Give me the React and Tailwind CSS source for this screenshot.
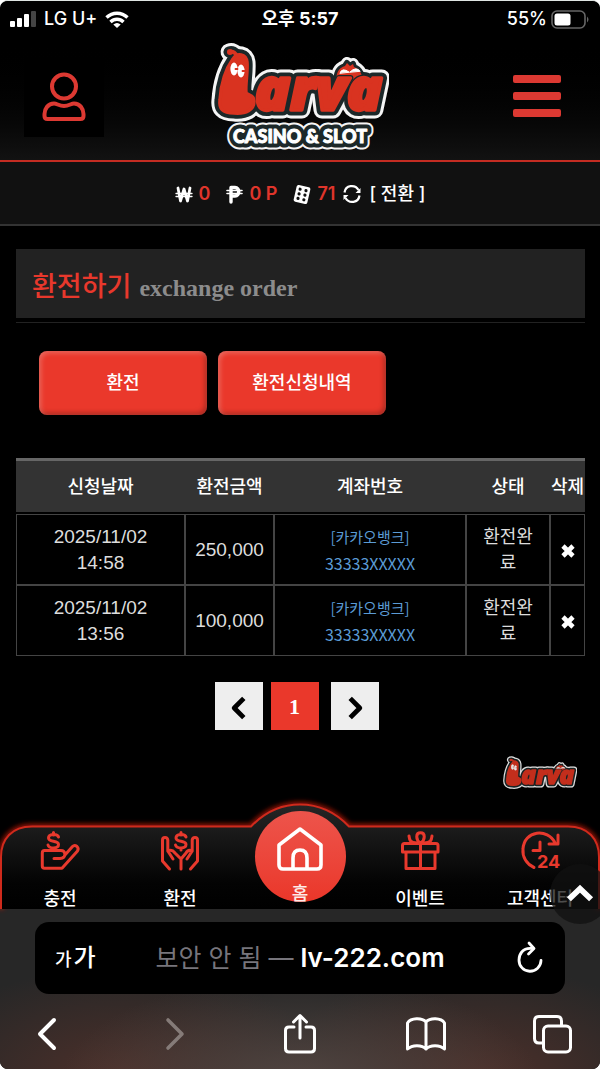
import React from "react";

const KR = "font-['Inter','Noto_Sans_CJK_KR',sans-serif]";

function LarvaLogo({ id, subtitle, className }) {
  const word = `${id}-word`;
  const sub = `${id}-sub`;
  const buddy = `${id}-buddy`;
  return (
    <svg
      className={className}
      viewBox={subtitle ? "0 0 178 112" : "0 0 178 82"}
      role="img"
      aria-label={subtitle ? "Larva Casino & Slot" : "Larva"}
      strokeLinejoin="round"
      strokeLinecap="round"
    >
      <defs>
        <g id={word}>
          <text x="44" y="70" className="font-['Open_Sans',sans-serif] text-[58px] font-extrabold italic">
            arva
          </text>
          <path d="M22 19C26 12 35 14 36 22C37 32 34 44 35 53C38 56 43 55 43 61C43 70 35 74 23 73C11 73 8 68 9 60C10 45 14 30 22 19Z" />
          <path d="M18 12C21 11 24 12 26 16" />
        </g>
        <path
          id={buddy}
          d="M126 46C124 32 128 28 134 26L136 23L139 26L142 24L143 27C149 29 152 34 152 46Z"
        />
        {subtitle && (
          <text
            id={sub}
            x="89"
            y="103"
            textAnchor="middle"
            className="font-['Lato',sans-serif] text-[18px] font-black"
          >
            CASINO &amp; SLOT
          </text>
        )}
      </defs>
      <g fill="#f5f5f5" stroke="#f5f5f5">
        <use href={`#${word}`} strokeWidth="17" />
        <use href={`#${buddy}`} strokeWidth="12" />
      </g>
      <g fill="#1c2829" stroke="#1c2829">
        <use href={`#${word}`} strokeWidth="11" />
        <use href={`#${buddy}`} strokeWidth="6" />
      </g>
      <use href={`#${buddy}`} fill="#d93320" />
      <path d="M129 33Q131 27 138 32ZM139 32Q145 26 149 31Z" fill="#fff" stroke="#fff" />
      <use href={`#${word}`} fill="#1c2829" stroke="#1c2829" strokeWidth="6" />
      <use href={`#${word}`} fill="#d93320" stroke="#d93320" strokeWidth="3.5" />
      <circle cx="19" cy="12" r="3" fill="#d93320" />
      <g fill="#fff">
        <ellipse cx="23" cy="29" rx="3.6" ry="6.5" />
        <ellipse cx="30" cy="31" rx="3.6" ry="6.5" />
      </g>
      <path d="M24.500 29h2M31.500 31h2" stroke="#d93320" strokeWidth="1.8" />
      {subtitle && (
        <>
          <use href={`#${sub}`} fill="#f5f5f5" stroke="#f5f5f5" strokeWidth="13" />
          <use href={`#${sub}`} fill="#1c2829" stroke="#1c2829" strokeWidth="9" />
          <use href={`#${sub}`} fill="#fff" stroke="#fff" strokeWidth="1" />
        </>
      )}
    </svg>
  );
}

function Icon({ className, box = "0 0 40 40", width = 2.6, children }) {
  return (
    <svg
      className={`overflow-visible ${className}`}
      viewBox={box}
      fill="none"
      stroke="currentColor"
      strokeWidth={width}
      strokeLinecap="round"
      strokeLinejoin="round"
      aria-hidden="true"
    >
      {children}
    </svg>
  );
}

function StatusBar() {
  return (
    <div className="grid h-9 grid-cols-3 items-center px-2.5 text-lg font-medium text-white">
      <div className="flex items-center gap-2">
        <svg className="h-4 w-[26px]" viewBox="0 0 26 16" fill="#fff" aria-hidden="true">
          <rect x="0" y="10" width="5" height="6" rx="1" />
          <rect x="7" y="7" width="5" height="9" rx="1" />
          <rect x="14" y="3" width="5" height="13" rx="1" />
          <rect x="21" y="0" width="5" height="16" rx="1" fill="#444" />
        </svg>
        <span>LG U+</span>
        <svg className="h-[17px] w-6" viewBox="0 0 24 17" fill="none" stroke="#fff" strokeWidth="3.4" aria-hidden="true">
          <path d="M1.500 6.500C7.500 .8 16.500 .8 22.500 6.500M5.500 11C9.300 7.300 14.700 7.300 18.500 11" />
          <path d="M8.300 13.500Q12 10.300 15.700 13.500L12 17Z" fill="#fff" stroke="none" />
        </svg>
      </div>
      <div className="text-center font-bold">오후 5:57</div>
      <div className="flex items-center justify-end gap-1">
        <span>55%</span>
        <svg className="h-[19px] w-[39px]" viewBox="0 0 39 19" aria-hidden="true">
          <rect x="1" y="1" width="33" height="17" rx="5" fill="none" stroke="#666" strokeWidth="1.6" />
          <rect x="3.500" y="3.500" width="16" height="12" rx="2.500" fill="#fff" />
          <path d="M36 6.500q3 3 0 6Z" fill="#666" />
        </svg>
      </div>
    </div>
  );
}

function Balances() {
  return (
    <section className="flex h-16 items-center justify-center border-b-2 border-[#333] bg-[#111] pt-0.5 text-lg font-semibold text-[#e0352b]">
      <span className="flex items-center gap-1.5">
        <Icon className="h-[17px] w-[18px] text-white" box="0 0 18 17" width={2.8}>
          <path d="M3 2L5.500 15L9 3L12.500 15L15 2" />
          <path d="M1 7.500H17M1 10.500H17" strokeWidth="1.300" />
        </Icon>
        0
      </span>
      <span className="ml-4 flex items-center gap-1.5">
        <Icon className="h-[19px] w-[17px] text-white" box="0 0 17 19" width={3.4}>
          <path d="M5 17V2.500H9C14 2.500 14 11 9 11H5" />
          <path d="M1 5.500H16M1 8.500H16" strokeWidth="1.600" />
        </Icon>
        0 P
      </span>
      <span className="ml-4 flex items-center gap-1.5">
        <svg className="h-[19px] w-[18px]" viewBox="0 0 18 19" aria-hidden="true">
          <g transform="rotate(13 9 9.500)">
            <rect x="2" y="1" width="14" height="17" rx="2" fill="#fff" />
            <g fill="#111">
              <circle cx="6" cy="4.800" r="1.600" />
              <circle cx="6" cy="9.500" r="1.600" />
              <circle cx="6" cy="14.200" r="1.600" />
              <circle cx="12" cy="4.800" r="1.600" />
              <circle cx="12" cy="9.500" r="1.600" />
              <circle cx="12" cy="14.200" r="1.600" />
            </g>
          </g>
        </svg>
        71
      </span>
      <button type="button" className="ml-2 flex items-center gap-2 font-medium text-white">
        <Icon className="h-5 w-[18px]" box="0 0 18 20" width={2.2}>
          <path d="M1.500 8.500C2.500 1 12 0 15.500 6M16.500 11.500C15.500 19 6 20 2.500 14" strokeLinecap="butt" />
          <path d="M17.500 4V9H12.500ZM.5 16V11H5.500Z" fill="currentColor" stroke="none" />
        </Icon>
        [ 전환 ]
      </button>
    </section>
  );
}

const orders = [
  { day: "2025/11/02", time: "14:58", amount: "250,000" },
  { day: "2025/11/02", time: "13:56", amount: "100,000" },
];

const redButton =
  "h-16 w-[168px] rounded-lg bg-[#ea382b] text-lg font-medium text-white shadow-[inset_2px_2px_5px_rgba(255,255,255,0.25),inset_-2px_-2px_5px_rgba(0,0,0,0.3)]";
const cell = "border border-[#444] p-0 text-center";

function Orders() {
  return (
    <table className="mt-[43px] w-full table-fixed border-separate border-spacing-0 text-lg text-[#ddd]">
      <colgroup>
        <col className="w-[169px]" />
        <col className="w-[89px]" />
        <col />
        <col className="w-[84px]" />
        <col className="w-[35px]" />
      </colgroup>
      <thead>
        <tr className="h-14 whitespace-nowrap text-white">
          {["신청날짜", "환전금액", "계좌번호", "상태", "삭제"].map((h) => (
            <th key={h} scope="col" className="border-t-3 border-b-2 border-t-[#666] border-b-black bg-[#333] p-0 font-medium">
              {h}
            </th>
          ))}
        </tr>
      </thead>
      <tbody>
        {orders.map((o) => (
          <tr key={o.time} className="h-[71px] leading-[26px]">
            <td className={`${cell} font-['Liberation_Sans',sans-serif] text-[19px]`}>
              {o.day}
              <br />
              {o.time}
            </td>
            <td className={`${cell} font-['Liberation_Sans',sans-serif] text-[19px]`}>{o.amount}</td>
            <td className={`${cell} font-['Noto_Sans_CJK_KR',sans-serif] text-[#5b9bd5]`}>
              <div className="text-[15px] leading-[26px]">[카카오뱅크]</div>
              <div className="text-base leading-[26px]">33333XXXXX</div>
            </td>
            <td className={`${cell} px-3 break-all`}>환전완료</td>
            <td className={cell}>
              <button type="button" aria-label="삭제" className="align-middle text-white">
                <Icon className="h-3.5 w-3.5" box="0 0 14 14" width={4.6}>
                  <path d="M2 2L12 12M12 2L2 12" strokeLinecap="butt" />
                </Icon>
              </button>
            </td>
          </tr>
        ))}
      </tbody>
    </table>
  );
}

const dollar = "M26 6C25 2.500 16 2.500 16 7C16 11.500 26 9 26 13.500C26 18 16.500 18 15.500 14M21 1.500V4M21 17V19";

function NavItem({ label, children }) {
  return (
    <a href="#" className="flex flex-1 flex-col items-center pt-7 text-lg leading-6 font-medium text-white">
      <Icon className="mb-4 h-10 w-10 text-[#e8392d]" width={3}>{children}</Icon>
      {label}
    </a>
  );
}

function BottomNav() {
  const outline =
    "M1 106V54C1 36 12 23.500 32 23.500H251C262 12 278 1.500 300 1.500S338 12 349 23.500H568C588 23.500 599 36 599 54V106";
  return (
    <nav className="relative h-[105px]">
      <svg className="absolute inset-0 h-full w-full overflow-visible" viewBox="0 0 600 105" preserveAspectRatio="none" aria-hidden="true">
        <defs>
          <linearGradient id="navFill" x1="0" y1="0" x2="0" y2="1">
            <stop offset="0" stopColor="#262626" />
            <stop offset="0.750" stopColor="#030303" />
            <stop offset="1" stopColor="#000" />
          </linearGradient>
          <filter id="navGlow" x="-5%" y="-20%" width="110%" height="140%">
            <feGaussianBlur stdDeviation="2.500" />
          </filter>
        </defs>
        <path d={outline} fill="none" stroke="#f02010" strokeWidth="5" opacity="0.700" filter="url(#navGlow)" />
        <path d={outline} fill="url(#navFill)" stroke="#cf2a1c" strokeWidth="2" />
      </svg>
      <div className="relative flex h-full">
        <NavItem label="충전">
          <path d="M14 19.500H4.500Q2.300 19.500 2.300 22V35Q2.300 37.300 4.500 37.300H22L37.500 20Q39 17.500 37 15.500Q34.500 13.500 32.500 15.500L24.500 24.500M14 27.500H20Q25 27 25 23Q24.500 19.500 21 19.500H14" />
          <path d={dollar} transform="translate(-7.500 0)" />
        </NavItem>
        <NavItem label="환전">
          <path d="M9.500 38L2.500 30V9Q2.500 6.500 5 6.500T7.800 9V20L13 28M7.800 20Q12 18 15 22L21 28V38M30.500 38L37.500 30V9Q37.500 6.500 35 6.500T32.200 9V20L27 28M32.200 20Q28 18 26 22L21 28" />
          <path d={dollar} />
        </NavItem>
        <a href="#" className="flex flex-1 flex-col items-center pt-2 text-lg leading-5 font-medium text-white">
          <span className="flex h-[91px] w-[91px] flex-col items-center rounded-full bg-linear-to-b from-[#ed544b] to-[#ea3629] pt-[15px]">
            <Icon className="h-[46px] w-12" box="0 0 48 46" width={3.6}>
              <path d="M3 19L24 3L45 19V39Q45 43 41 43H7Q3 43 3 39ZM17 43V32Q17 24 24 24T31 32V43" />
            </Icon>
            <span className="mt-3 text-white/90">홈</span>
          </span>
        </a>
        <NavItem label="이벤트">
          <path d="M2.500 14.500Q2.500 12.500 4.500 12.500H36Q38 12.500 38 14.500V21H2.500ZM6 21V37.500H35V21M20.500 12.500V37.500" />
          <path d="M20.500 12C15.500 9 15.500 1.800 20.500 1.800S25.500 9 20.500 12M17 12C10 12 9.500 9 9 5M24 12C31 12 31.500 9 32 5" />
        </NavItem>
        <NavItem label="고객센터">
          <path d="M14 36.500A18 18 0 0 1 3 18C4 -1 28 -3 35 12M38 4V13H29M20 11V19.500H13" />
          <text x="17" y="37" className="fill-current stroke-none font-['Inter',sans-serif] text-[18px] font-bold">
            24
          </text>
        </NavItem>
      </div>
      <button
        type="button"
        aria-label="맨 위로"
        className="absolute -right-2.5 -bottom-4 z-10 flex h-[60px] w-[60px] items-center justify-center rounded-full bg-[#111]/75 text-white"
      >
        <Icon className="h-6 w-7" box="0 0 24 20" width={5}>
          <path d="M2.500 14.500L12 5.500L21.500 14.500" strokeLinecap="butt" strokeLinejoin="miter" />
        </Icon>
      </button>
    </nav>
  );
}

function BrowserBar() {
  return (
    <footer className="bg-[#272727] bg-[radial-gradient(ellipse_240px_110px_at_50%_110%,#524642,transparent),radial-gradient(ellipse_210px_110px_at_20%_105%,#4d302a,transparent),radial-gradient(ellipse_210px_110px_at_80%_105%,#4d302a,transparent)] pt-3.5 pb-[15px]">
      <div className="mx-[35px] grid h-[72px] grid-cols-[1fr_auto_1fr] items-center rounded-[14px] bg-black px-5 text-white">
        <button type="button" className="flex items-baseline gap-0.5 justify-self-start text-2xl font-medium">
          <span className="text-lg">가</span>가
        </button>
        <div className="text-[26px] font-semibold whitespace-nowrap">
          <span className="text-[25px] font-normal text-[#77757c]">보안 안 됨 — </span>lv-222.com
        </div>
        <button type="button" aria-label="새로고침" className="justify-self-end">
          <Icon className="h-[34px] w-[30px]" box="0 0 30 34" width={2.8}>
            <path d="M17 7.500C7 6.500 4 14 4 19A11 11 0 0 0 26 19.500M14 2L19 7.500L13.500 13" />
          </Icon>
        </button>
      </div>
      <div className="mt-5 flex h-10 items-center justify-between px-7 text-white">
        <button type="button" aria-label="뒤로">
          <Icon className="h-10 w-10" width={4}>
            <path d="M26 6L12 20L26 34" />
          </Icon>
        </button>
        <button type="button" aria-label="앞으로" className="text-[#857b78]">
          <Icon className="h-10 w-10" width={3.6}>
            <path d="M14 6L28 20L14 34" />
          </Icon>
        </button>
        <button type="button" aria-label="공유">
          <Icon className="h-10 w-10" width={3}>
            <path d="M14 13H9Q5.500 13 5.500 16.500V34.500Q5.500 38 9 38H31Q34.500 38 34.500 34.500V16.500Q34.500 13 31 13H26M20 24V2M13.500 8L20 1.500L26.500 8" />
          </Icon>
        </button>
        <button type="button" aria-label="책갈피">
          <Icon className="h-10 w-10" width={3}>
            <path d="M20 8C16 3.500 5 3.500 1.500 9V35C6 30.500 16 30.500 20 35C24 30.500 34 30.500 38.500 35V9C35 3.500 24 3.500 20 8V35" />
          </Icon>
        </button>
        <button type="button" aria-label="탭">
          <Icon className="h-10 w-10" width={3}>
            <rect x="11.500" y="12" width="27" height="26" rx="4.500" />
            <path d="M11 29H7Q2.500 29 2.500 24.500V7Q2.500 2.500 7 2.500H25Q29.500 2.500 29.500 7V11.500" />
          </Icon>
        </button>
      </div>
    </footer>
  );
}

export default function App() {
  return (
    <div className={`${KR} overflow-hidden rounded-lg border-t border-[#dfe5e2] bg-black`}>
      <header className="border-b-2 border-[#c42c22] bg-linear-to-b from-black from-20% to-[#121212]">
        <StatusBar />
        <div className="flex h-[123px] items-start justify-between px-6 pt-[3px]">
          <button type="button" aria-label="내 정보" className="mt-[17px] flex h-20 w-20 items-center justify-center bg-black text-[#dc3932]">
            <Icon className="h-[50px] w-11" box="0 0 44 50" width={4}>
              <circle cx="22" cy="14.500" r="12" />
              <path d="M12 31.500C15 31.500 17 34 22 34S29 31.500 32 31.500C38 31.500 41.500 37 41.500 42V44Q41.500 47 38.500 47H5.500Q2.500 47 2.500 44V42C2.500 37 6 31.500 12 31.500Z" />
            </Icon>
          </button>
          <LarvaLogo id="main" subtitle className="h-28 w-[178px]" />
          <button type="button" aria-label="메뉴" className="mt-[35px] mr-[15px] ml-[17px] flex w-12 flex-col gap-[9px]">
            <span className="h-2 rounded-xs bg-[#dc3932]" />
            <span className="h-2 rounded-xs bg-[#dc3932]" />
            <span className="h-2 rounded-xs bg-[#dc3932]" />
          </button>
        </div>
      </header>
      <Balances />
      <main className="pt-[23px] pr-[15px] pl-4">
        <h1 className="flex h-[69px] items-baseline gap-2 bg-[#222] px-4 pt-[18px] text-[27px] font-medium text-[#e8382c]">
          환전하기
          <small className="font-['Liberation_Serif',serif] text-2xl font-bold text-[#8c8c8c]">exchange order</small>
        </h1>
        <div className="mt-1 h-px bg-[#222]" />
        <div className="mt-7 flex gap-[11px] pl-[23px]">
          <button type="button" className={redButton}>환전</button>
          <button type="button" className={redButton}>환전신청내역</button>
        </div>
        <Orders />
        <div className="mt-[26px] flex justify-center gap-2 pr-2">
          <button type="button" aria-label="이전" className="flex h-12 w-12 items-center justify-center bg-[#eee] pt-1 text-black">
            <Icon className="h-6 w-5" box="0 0 16 20" width={4}>
              <path d="M12 2L4 10L12 18" strokeLinecap="butt" />
            </Icon>
          </button>
          <button type="button" className="mr-1 h-12 w-12 bg-[#ea382b] font-['Liberation_Serif',serif] text-[22px] font-bold text-white">
            1
          </button>
          <button type="button" aria-label="다음" className="flex h-12 w-12 items-center justify-center bg-[#eee] pt-1 text-black">
            <Icon className="h-6 w-5" box="0 0 16 20" width={4}>
              <path d="M4 2L12 10L4 18" strokeLinecap="butt" />
            </Icon>
          </button>
        </div>
        <div className="flex justify-end pt-6 pr-2 pb-[13px]">
          <LarvaLogo id="small" className="h-9 w-[74px] opacity-90" />
        </div>
      </main>
      <BottomNav />
      <BrowserBar />
    </div>
  );
}
